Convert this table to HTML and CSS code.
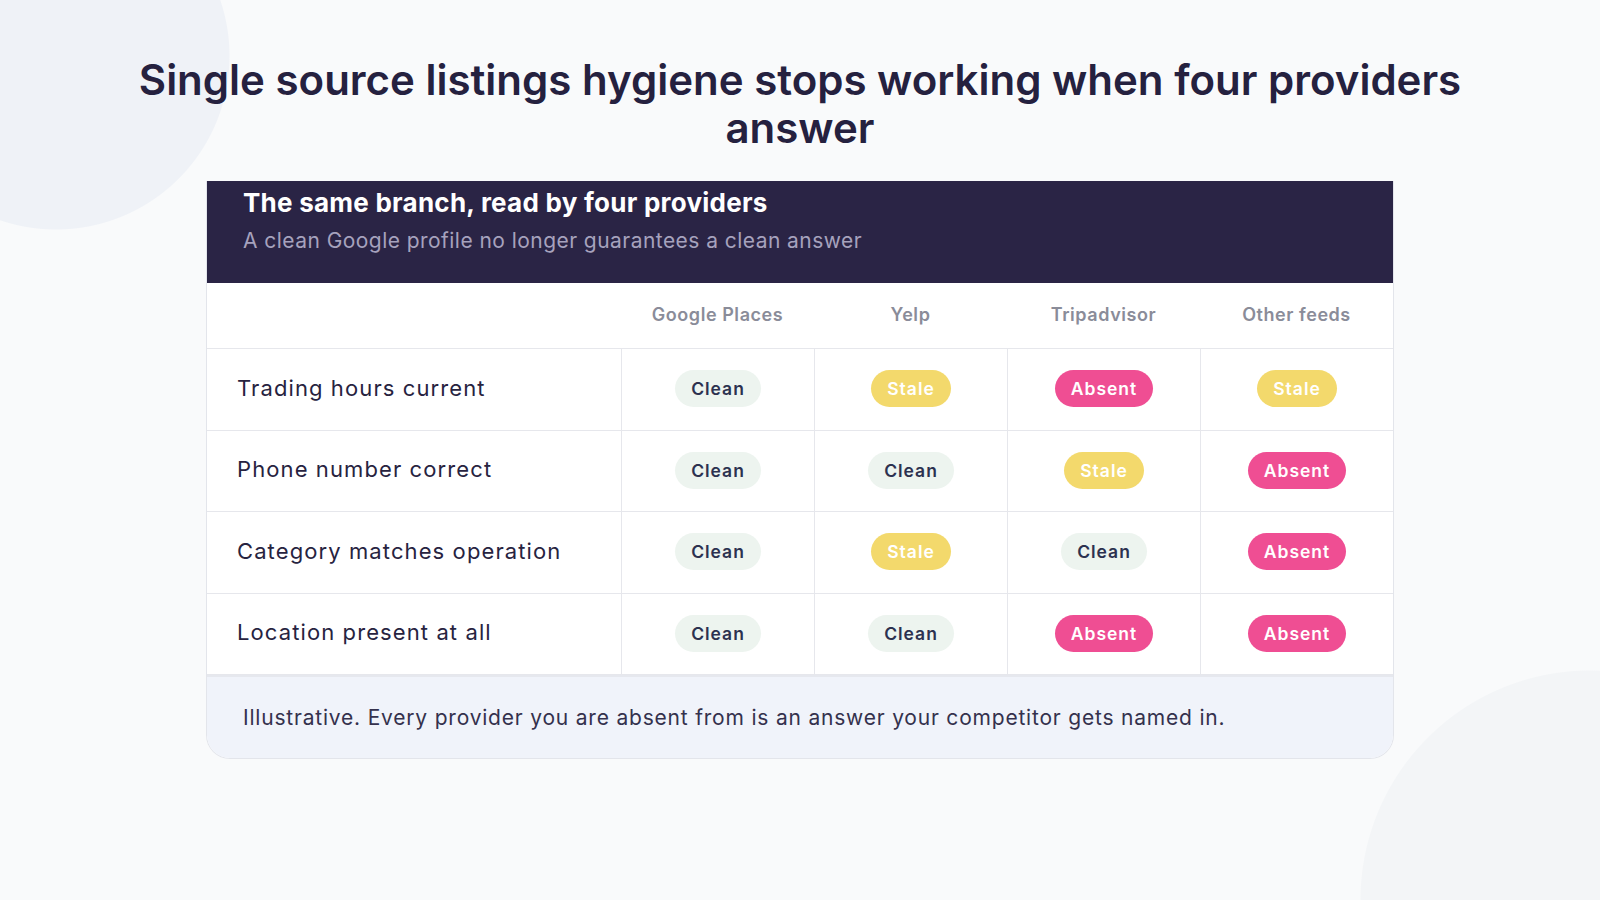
FILE: index.html
```html
<!DOCTYPE html>
<html lang="en">
<head>
<meta charset="utf-8">
<title>Listings hygiene</title>
<link rel="stylesheet" href="styles.css">
</head>
<body>
<main class="page">
  <h1 class="title">Single source listings hygiene stops working when four providers answer</h1>
  <section class="card">
    <header class="card-head">
      <h2 class="card-title">The same branch, read by four providers</h2>
      <p class="card-sub">A clean Google profile no longer guarantees a clean answer</p>
    </header>
    <div class="grid">
      <div class="hcell"></div>
      <div class="hcell">Google Places</div>
      <div class="hcell">Yelp</div>
      <div class="hcell">Tripadvisor</div>
      <div class="hcell">Other feeds</div>

      <div class="label">Trading hours current</div>
      <div class="cell"><span class="badge clean">Clean</span></div>
      <div class="cell"><span class="badge stale">Stale</span></div>
      <div class="cell"><span class="badge absent">Absent</span></div>
      <div class="cell"><span class="badge stale">Stale</span></div>

      <div class="label">Phone number correct</div>
      <div class="cell"><span class="badge clean">Clean</span></div>
      <div class="cell"><span class="badge clean">Clean</span></div>
      <div class="cell"><span class="badge stale">Stale</span></div>
      <div class="cell"><span class="badge absent">Absent</span></div>

      <div class="label">Category matches operation</div>
      <div class="cell"><span class="badge clean">Clean</span></div>
      <div class="cell"><span class="badge stale">Stale</span></div>
      <div class="cell"><span class="badge clean">Clean</span></div>
      <div class="cell"><span class="badge absent">Absent</span></div>

      <div class="label">Location present at all</div>
      <div class="cell"><span class="badge clean">Clean</span></div>
      <div class="cell"><span class="badge clean">Clean</span></div>
      <div class="cell"><span class="badge absent">Absent</span></div>
      <div class="cell"><span class="badge absent">Absent</span></div>
    </div>
    <footer class="card-foot">Illustrative. Every provider you are absent from is an answer your competitor gets named in.</footer>
  </section>
</main>
</body>
</html>
```

FILE: styles.css
```css
* { box-sizing: border-box; }

html, body {
  margin: 0;
  padding: 0;
}

body {
  width: 1600px;
  height: 900px;
  background:
    radial-gradient(circle at 56px 56px, #eff2f7 173px, rgba(239, 242, 247, 0) 174px),
    radial-gradient(circle at 1590px 900px, #f3f5f7 229px, rgba(243, 245, 247, 0) 230px),
    #f9fafb;
  font-family: "Inter", "Open Sans", sans-serif;
  color: #26223f;
  overflow: hidden;
}

.page {
  width: 1188px;
  margin: 0 auto;
  padding-top: 56px;
}

.title {
  margin: 0 -120px;
  text-align: center;
  font-size: 42px;
  line-height: 48px;
  font-weight: 600;
  letter-spacing: 0;
  color: #25213f;
}

.card {
  margin-top: 29px;
  background: #ffffff;
  border: 1px solid #e3e5eb;
  border-top: none;
  border-radius: 0 0 24px 24px;
  overflow: hidden;
}

.card-head {
  background: #2a2445;
  height: 102px;
  padding: 4px 36px 0;
}

.card-title {
  margin: 0;
  font-size: 26px;
  line-height: 36px;
  font-weight: 700;
  letter-spacing: 0.25px;
  color: #ffffff;
}

.card-sub {
  margin: 6px 0 0;
  font-size: 21px;
  line-height: 28px;
  font-weight: 400;
  letter-spacing: 0.45px;
  color: #a6a2bd;
}

.grid {
  display: grid;
  grid-template-columns: 414px repeat(4, 1fr);
}

.hcell {
  height: 66px;
  display: flex;
  align-items: center;
  justify-content: center;
  padding-bottom: 3px;
  font-size: 18px;
  font-weight: 600;
  letter-spacing: 0.55px;
  color: #8a8c99;
  border-bottom: 1px solid #e6e7ec;
}

.label {
  height: 81.5px;
  display: flex;
  align-items: center;
  padding-left: 30px;
  padding-bottom: 3px;
  font-size: 22px;
  font-weight: 400;
  letter-spacing: 1.1px;
  color: #27233f;
  border-bottom: 1px solid #e6e7ec;
}

.cell {
  height: 81.5px;
  display: flex;
  align-items: center;
  justify-content: center;
  padding-bottom: 1px;
  border-bottom: 1px solid #e6e7ec;
  border-left: 1px solid #e6e7ec;
}

.badge {
  display: inline-block;
  height: 37px;
  line-height: 37px;
  padding: 0 16px;
  border-radius: 19px;
  font-size: 17.5px;
  font-weight: 600;
  letter-spacing: 1px;
}

.badge.clean {
  background: #edf4ef;
  color: #2c3150;
}

.badge.stale {
  background: #f3d96c;
  color: #ffffff;
}

.badge.absent {
  background: #ef4e93;
  color: #ffffff;
}

.card-foot {
  border-top: 2px solid #e6e8ee;
  background: #f0f3fa;
  height: 83px;
  display: flex;
  align-items: center;
  padding-left: 36px;
  font-size: 21px;
  letter-spacing: 0.8px;
  color: #34314d;
}
```
